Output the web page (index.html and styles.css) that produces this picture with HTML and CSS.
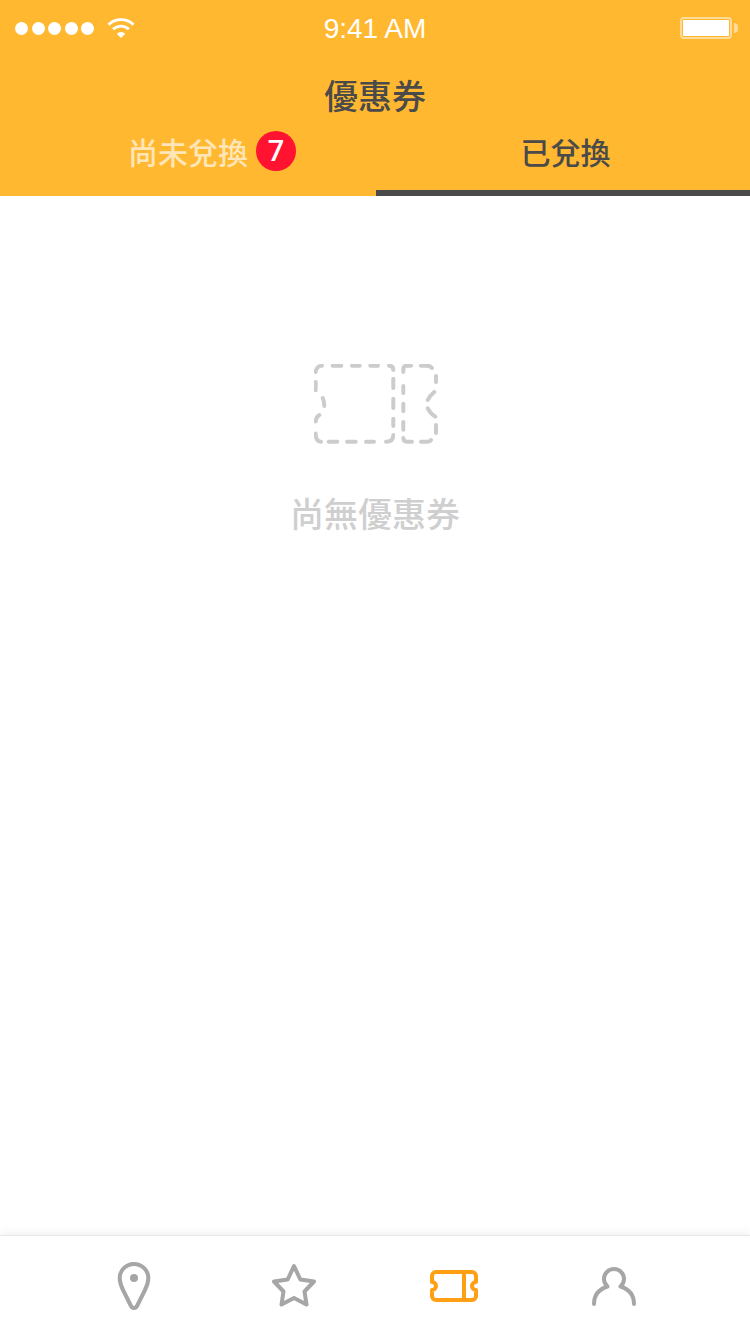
FILE: index.html
```html
<!DOCTYPE html>
<html lang="zh-Hant">
<head>
  <meta charset="UTF-8" />
  <meta name="viewport" content="width=device-width, initial-scale=1" />
  <title>優惠券</title>
  <link rel="stylesheet" href="styles.css">
</head>
<body>

<div class="page">
  <header class="header">
    <div class="status-bar">
      <div class="status-left">
        <span class="signal"><i></i><i></i><i></i><i></i><i></i></span>
        <svg class="wifi" viewBox="0 0 30 24" width="28" height="22">
          <path d="M1.4 8.4A19.5 19.5 0 0 1 28.6 8.4" fill="none" stroke="#fff" stroke-width="3.2"/>
          <path d="M6.4 13.4A12.5 12.5 0 0 1 23.6 13.4" fill="none" stroke="#fff" stroke-width="3.2"/>
          <path d="M15 23L10.3 18.2A6.6 6.6 0 0 1 19.7 18.2Z" fill="#fff"/>
        </svg>
      </div>
      <div class="status-time">9:41 AM</div>
      <div class="status-right">
        <div class="battery"><div class="battery-fill"></div></div>
      </div>
    </div>

    <h1 class="title">優惠券</h1>

    <nav class="tabs">
      <div class="tab tab-idle">
        <span class="tab-label">尚未兌換<span class="badge">7</span></span>
      </div>
      <div class="tab tab-active">
        <span class="tab-label">已兌換</span>
      </div>
    </nav>
  </header>

  <main class="empty">
    <svg class="empty-icon" viewBox="0 0 124 80" width="124" height="80">
      <!-- dashes placed one by one, the ticket outline is not evenly dashed -->
      <path class="dash" d="M1.7 8A6.5 6.5 0 0 1 8 1.7M18.7 1.7H27.3M38 1.7H45.7M56.3 1.7H64M75 1.7Q79.3 1.7 79.3 6M79.3 14.7V24M79.3 34.7V44M79.3 54.7V62M79.3 71Q79.3 77.7 72 77.7M60 77.7H52M41.7 77.7H33M23.3 77.7H14.7M7 77.7Q1.7 77.7 1.7 69.5M1.7 18V26.3M8.7 34Q10.5 38 10.3 42M5.3 51Q1.9 53 1.7 57.5"/>
      <path class="dash" d="M89.3 8V5Q89.3 1.7 93 1.7H97M89.3 22V29M89.3 39.7V47.3M89.3 58V65.7M89.3 74Q89.3 77.7 93 77.7H98M107 77.7H113Q116 77.7 117 76M122 61V69M107 1.7H113Q116 1.7 118 4M122 12V18M120.3 28Q115.5 32 113.7 36M113.7 44.3Q116 49 121.3 52.7"/>
    </svg>
    <p class="empty-text">尚無優惠券</p>
  </main>

  <footer class="tabbar">
    <div class="tabbar-item">
      <svg viewBox="0 0 48 48" width="48" height="48">
        <path class="ico" d="M24 2C16 2 9.7 8.5 9.7 16C9.7 20 11 24 13 28L21 44C22.4 46.8 25.6 46.8 27 44L35 28C37 24 38.3 20 38.3 16C38.3 8.5 32 2 24 2Z"/>
        <circle cx="24" cy="16" r="4" fill="#a6a6a6"/>
      </svg>
    </div>
    <div class="tabbar-item">
      <svg viewBox="0 0 48 48" width="48" height="48">
        <path class="ico" d="M24 4L30.3 17.5L44 19.5L34.5 29.5L36.5 42.5L24 36L11.5 42.5L13.5 29.5L4 19.5L17.7 17.5Z"/>
      </svg>
    </div>
    <div class="tabbar-item">
      <svg viewBox="0 0 48 48" width="48" height="48">
        <path class="ico ico-on" d="M6 10H42a4 4 0 0 1 4 4V20a4 4 0 0 0 0 8V34a4 4 0 0 1-4 4H6a4 4 0 0 1-4-4V28a4 4 0 0 0 0-8V14a4 4 0 0 1 4-4ZM34 10V38"/>
      </svg>
    </div>
    <div class="tabbar-item">
      <svg viewBox="0 0 48 48" width="48" height="48">
        <path class="ico" d="M4 42C4 33 9.5 27 17.5 24.5A10 10 0 1 1 30.5 24.5C38.5 27 44 33 44 42"/>
      </svg>
    </div>
  </footer>
</div>

</body>
</html>
```

FILE: styles.css
```css
body {
  margin: 0;
  background: #fff;
  font-family: "Noto Sans CJK TC", "Liberation Sans", sans-serif;
}

.page {
  display: flex;
  flex-direction: column;
  min-height: 100vh;
}

.header {
  background: #ffb830;
  color: #4a4a4a;
}

.status-bar {
  display: grid;
  grid-template-columns: 1fr auto 1fr;
  align-items: center;
  height: 56px;
  padding: 0 15px;
}

.status-left {
  display: flex;
  align-items: center;
  gap: 13px;
}

.signal {
  display: flex;
  gap: 3.5px;
}

.signal i {
  width: 13px;
  height: 13px;
  border-radius: 50%;
  background: #fff;
}

.wifi {
  display: block;
  margin-bottom: 1px;
}

.status-time {
  padding-top: 2px;
  font-family: "Liberation Sans", sans-serif;
  font-size: 28px;
  color: #fff;
}

.status-right {
  display: flex;
  justify-content: flex-end;
}

.battery {
  position: relative;
  box-sizing: border-box;
  width: 52px;
  height: 22px;
  padding: 1px;
  margin-right: 3px;
  border: 2px solid #ffdb99;
  border-radius: 4px;
}

.battery::after {
  content: "";
  position: absolute;
  right: -8px;
  top: 4px;
  width: 4px;
  height: 10px;
  border-radius: 0 4px 4px 0;
  background: #ffdb99;
}

.battery-fill {
  height: 100%;
  background: #fff;
  border-radius: 1px;
}

.title {
  margin: 15px 0 1px;
  font-size: 34px;
  font-weight: 500;
  line-height: 48px;
  text-align: center;
}

.tabs {
  display: grid;
  grid-template-columns: 376px 374px;
}

.tab {
  box-sizing: border-box;
  height: 76px;
  padding-bottom: 8px;
  border-bottom: 6px solid transparent;
  display: flex;
  align-items: center;
  justify-content: center;
  font-size: 30px;
  font-weight: 500;
}

.tab-idle {
  color: #ffe6b8;
}

.tab-active {
  padding-left: 5px;
  border-bottom-color: #4a4a4a;
}

.tab-label {
  position: relative;
}

.badge {
  position: absolute;
  left: 128px;
  top: 50%;
  width: 40px;
  height: 40px;
  margin-top: -20px;
  border-radius: 50%;
  background: #ff1330;
  color: #fff;
  font-family: Roboto, "Liberation Sans", sans-serif;
  font-size: 29px;
  font-weight: 500;
  line-height: 41px;
  text-align: center;
}

.empty {
  flex: 1;
  display: flex;
  flex-direction: column;
  align-items: center;
  padding-top: 168px;
}

.empty-icon {
  display: block;
  margin-left: 2px;
}

.dash {
  fill: none;
  stroke: #cccccc;
  stroke-width: 4;
  stroke-linecap: round;
}

.empty-text {
  margin: 45px 0 0;
  font-size: 34px;
  font-weight: 500;
  line-height: 48px;
  color: #cfcfcf;
}

.tabbar {
  box-sizing: border-box;
  height: 99px;
  padding: 2px 56px 0 54px;
  display: flex;
  align-items: center;
  background: #fff;
  border-top: 1px solid #e6e6e6;
  box-shadow: 0 -3px 8px rgba(0, 0, 0, 0.05);
}

.tabbar-item {
  flex: 1;
  display: flex;
  justify-content: center;
}

.ico {
  fill: none;
  stroke: #a6a6a6;
  stroke-width: 4;
  stroke-linejoin: round;
  stroke-linecap: round;
}

.ico-on {
  stroke: #ff9f14;
  stroke-width: 4;
}
```
